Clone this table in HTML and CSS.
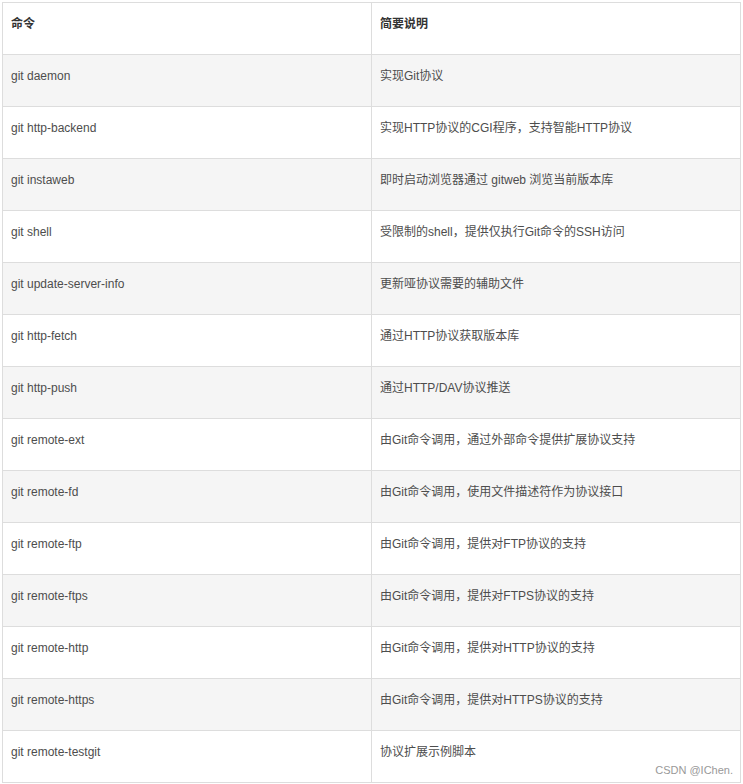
FILE: index.html
```html
<!DOCTYPE html>
<html lang="zh-CN">
<head>
    <meta charset="UTF-8">
    <meta name="viewport" content="width=device-width, initial-scale=1.0">
    <title>Git 命令</title>
    <link rel="stylesheet" href="styles.css">
</head>
<body>

<div class="wrap">
    <table class="cmd-table">
        <thead>
            <tr>
                <th>命令</th>
                <th>简要说明</th>
            </tr>
        </thead>
        <tbody>
            <tr><td>git daemon</td><td>实现Git协议</td></tr>
            <tr><td>git http-backend</td><td>实现HTTP协议的CGI程序，支持智能HTTP协议</td></tr>
            <tr><td>git instaweb</td><td>即时启动浏览器通过 gitweb 浏览当前版本库</td></tr>
            <tr><td>git shell</td><td>受限制的shell，提供仅执行Git命令的SSH访问</td></tr>
            <tr><td>git update-server-info</td><td>更新哑协议需要的辅助文件</td></tr>
            <tr><td>git http-fetch</td><td>通过HTTP协议获取版本库</td></tr>
            <tr><td>git http-push</td><td>通过HTTP/DAV协议推送</td></tr>
            <tr><td>git remote-ext</td><td>由Git命令调用，通过外部命令提供扩展协议支持</td></tr>
            <tr><td>git remote-fd</td><td>由Git命令调用，使用文件描述符作为协议接口</td></tr>
            <tr><td>git remote-ftp</td><td>由Git命令调用，提供对FTP协议的支持</td></tr>
            <tr><td>git remote-ftps</td><td>由Git命令调用，提供对FTPS协议的支持</td></tr>
            <tr><td>git remote-http</td><td>由Git命令调用，提供对HTTP协议的支持</td></tr>
            <tr><td>git remote-https</td><td>由Git命令调用，提供对HTTPS协议的支持</td></tr>
            <tr><td>git remote-testgit</td><td>协议扩展示例脚本</td></tr>
        </tbody>
    </table>
    <!-- 水印 -->
    <span class="watermark">CSDN @IChen.</span>
</div>

</body>
</html>
```

FILE: styles.css
```css
body {
    margin: 0;
    padding: 0;
    background-color: #FFF;
    font-family: 'Liberation Sans', Arial, 'Noto Sans CJK SC', sans-serif;
    font-size: 12px;
    color: #4D4D4D;
}
.wrap {
    position: relative;
    padding: 2px;
    width: 739px;
}
.cmd-table {
    width: 739px;
    border-collapse: collapse;
    table-layout: fixed;
}
.cmd-table th,
.cmd-table td {
    border: 1px solid #DDD;
    padding: 8px 8px 17px;
    line-height: 26px;
    height: 26px;
    text-align: left;
    vertical-align: top;
}
.cmd-table th {
    font-weight: bold;
    color: #333;
    background-color: #FFF;
}
.cmd-table tbody tr:nth-child(odd) {
    background-color: #F5F5F5;
}
.watermark {
    position: absolute;
    right: 10px;
    top: 764px;
    font-size: 11px;
    color: #999;
}
```
